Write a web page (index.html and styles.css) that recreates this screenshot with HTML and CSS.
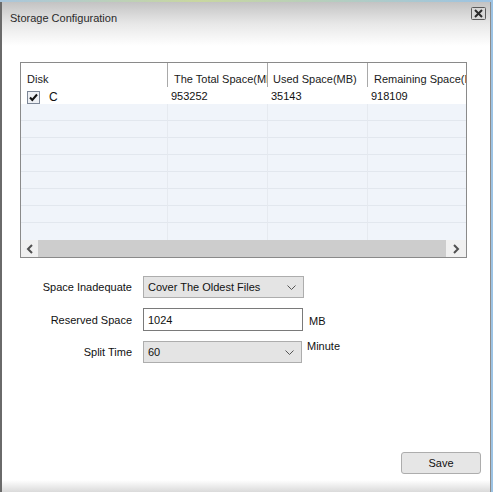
FILE: index.html
```html
<!DOCTYPE html>
<html>
<head>
<meta charset="utf-8">
<link rel="stylesheet" href="styles.css">
</head>
<body>
<div class="dialog">
  <div class="titlebar">
    <span class="title">Storage Configuration</span>
    <span class="close">
      <svg width="15" height="13" viewBox="0 0 15 13">
        <rect x="0.5" y="0.5" width="14" height="12" rx="1" fill="#d8d8d8" stroke="#5a5a5a"/>
        <path d="M4 3 L11 10 M11 3 L4 10" stroke="#2a2a2a" stroke-width="2"/>
      </svg>
    </span>
  </div>

  <div class="table">
    <div class="row head">
      <div class="cell c1">Disk</div>
      <div class="cell c2">The Total Space(MB)</div>
      <div class="cell c3">Used Space(MB)</div>
      <div class="cell c4">Remaining Space(MB)</div>
    </div>
    <div class="row data">
      <div class="cell c1">
        <svg class="chk" width="13" height="13" viewBox="0 0 13 13">
          <rect x="0.5" y="0.5" width="12" height="12" fill="#eef0f4" stroke="#7d8797"/>
          <path d="M3 6.5 L5.3 9 L10 3.5" fill="none" stroke="#111" stroke-width="2"/>
        </svg>
        <span class="disk">C</span>
      </div>
      <div class="cell c2">953252</div>
      <div class="cell c3">35143</div>
      <div class="cell c4">918109</div>
    </div>
    <div class="row empty"><div class="cell c1"></div><div class="cell c2"></div><div class="cell c3"></div><div class="cell c4"></div></div>
    <div class="row empty"><div class="cell c1"></div><div class="cell c2"></div><div class="cell c3"></div><div class="cell c4"></div></div>
    <div class="row empty"><div class="cell c1"></div><div class="cell c2"></div><div class="cell c3"></div><div class="cell c4"></div></div>
    <div class="row empty"><div class="cell c1"></div><div class="cell c2"></div><div class="cell c3"></div><div class="cell c4"></div></div>
    <div class="row empty"><div class="cell c1"></div><div class="cell c2"></div><div class="cell c3"></div><div class="cell c4"></div></div>
    <div class="row empty"><div class="cell c1"></div><div class="cell c2"></div><div class="cell c3"></div><div class="cell c4"></div></div>
    <div class="row empty"><div class="cell c1"></div><div class="cell c2"></div><div class="cell c3"></div><div class="cell c4"></div></div>
    <div class="row empty last"><div class="cell c1"></div><div class="cell c2"></div><div class="cell c3"></div><div class="cell c4"></div></div>
    <div class="scrollbar">
      <div class="arrow left">
        <svg width="8" height="10" viewBox="0 0 8 10"><path d="M6 1 L2 5 L6 9" fill="none" stroke="#505050" stroke-width="2"/></svg>
      </div>
      <div class="thumb"></div>
      <div class="arrow right">
        <svg width="8" height="10" viewBox="0 0 8 10"><path d="M2 1 L6 5 L2 9" fill="none" stroke="#505050" stroke-width="2"/></svg>
      </div>
    </div>
  </div>

  <div class="form">
    <div class="label l1">Space Inadequate</div>
    <div class="select s1">
      <span>Cover The Oldest Files</span>
      <svg width="9" height="5" viewBox="0 0 9 5"><path d="M0.5 0.5 L4.5 4.5 L8.5 0.5" fill="none" stroke="#555" stroke-width="1"/></svg>
    </div>
    <div></div>

    <div class="label l2">Reserved Space</div>
    <div class="input">1024</div>
    <div class="unit u2">MB</div>

    <div class="label l3">Split Time</div>
    <div class="select s3">
      <span>60</span>
      <svg width="9" height="5" viewBox="0 0 9 5"><path d="M0.5 0.5 L4.5 4.5 L8.5 0.5" fill="none" stroke="#555" stroke-width="1"/></svg>
    </div>
    <div class="unit u3">Minute</div>
  </div>

  <div class="footer">
    <div class="btn">Save</div>
  </div>
</div>
</body>
</html>
```

FILE: styles.css
```css
html, body {
  margin: 0;
  padding: 0;
}
body {
  width: 493px;
  height: 492px;
  overflow: hidden;
  background: linear-gradient(90deg, #a9c6dd 0%, #c9d7a0 40%, #9cc3e4 100%);
  font-family: "Liberation Sans", Arial, sans-serif;
  font-size: 11px;
  color: #111;
}
.dialog {
  box-sizing: border-box;
  margin-top: 2px;
  width: 491px;
  height: 490px;
  border-left: 2px solid #6a6a6a;
  border-right: 1px solid #8c8c8c;
  background: linear-gradient(180deg, #c3c3c3 0px, #e8e8e8 22px, #ffffff 44px, #ffffff 478px, #dadada 490px);
  display: flex;
  flex-direction: column;
}
.titlebar {
  height: 32px;
  display: flex;
  justify-content: space-between;
  align-items: flex-start;
  padding-left: 8px;
  padding-right: 4px;
}
.title {
  margin-top: 10px;
  font-size: 11px;
  color: #2a2a2a;
  line-height: 13px;
}
.close {
  margin-top: 5px;
  display: block;
  height: 13px;
}
.close svg { display: block; }

.table {
  margin-top: 28px;
  margin-left: 18px;
  width: 447px;
  box-sizing: border-box;
  border: 1px solid #8a8a8a;
  background: #fff;
  overflow: hidden;
}
.row {
  display: grid;
  grid-template-columns: 146px 100px 100px 99px;
  white-space: nowrap;
}
.cell {
  overflow: hidden;
  box-sizing: border-box;
}
.head {
  height: 24px;
}
.head .cell {
  padding: 10px 0 0 6px;
  line-height: 13px;
  border-left: 1px solid #a9a9a9;
  color: #1a1a1a;
}
.head .c1 { border-left: 0; }
.head .c3 { padding-left: 5px; }
.head .c4 { padding-left: 6px; }
.data {
  height: 17px;
}
.data .cell {
  padding: 3px 0 0 3px;
  line-height: 13px;
  border-left: 1px solid transparent;
}
.data .c1 {
  border-left: 0;
  padding-left: 6px;
  padding-top: 1px;
  display: flex;
  align-items: center;
  height: 17px;
}
.chk { display: block; margin-top: 2px; }
.disk { margin-left: 9px; margin-top: 3px; font-size: 12px; }
.empty {
  height: 17px;
  background: #f0f4fa;
}
.empty .cell {
  border-bottom: 1px solid #e2e7ee;
  border-left: 1px solid #e6eaf0;
}
.empty .c1 { border-left: 0; }
.empty.last .cell { border-bottom: 0; }

.scrollbar {
  display: flex;
  height: 17px;
  background: #cdcdcd;
}
.arrow {
  width: 17px;
  display: flex;
  align-items: center;
  justify-content: center;
  background: #f0f0f0;
}
.arrow.right { width: 20px; }
.arrow svg { display: block; }
.thumb {
  flex: 1;
  background: #cdcdcd;
}

.form {
  margin-top: 18px;
  display: grid;
  grid-template-columns: 130px 161px auto;
  column-gap: 11px;
  row-gap: 10px;
  align-items: center;
}
.label {
  text-align: right;
  color: #111;
}
.select {
  box-sizing: border-box;
  height: 22px;
  border: 1px solid #adadad;
  background: #e4e4e4;
  display: flex;
  align-items: center;
  justify-content: space-between;
  padding: 0 7px 0 4px;
}
.select svg { display: block; }
.s3 { width: 159px; }
.input {
  box-sizing: border-box;
  height: 23px;
  width: 160px;
  border: 1px solid #7a7a7a;
  background: #fff;
  display: flex;
  align-items: center;
  padding-left: 4px;
}
.u2 { margin-left: -6px; padding-top: 2px; }
.u3 { margin-left: -8px; align-self: start; margin-top: -1px; }

.footer {
  margin-top: auto;
  display: flex;
  justify-content: flex-end;
  padding: 0 9px 18px 0;
}
.btn {
  box-sizing: border-box;
  width: 80px;
  height: 22px;
  border: 1px solid #adadad;
  border-radius: 3px;
  background: #e6e6e6;
  display: flex;
  align-items: center;
  justify-content: center;
  font-size: 11px;
}
```
